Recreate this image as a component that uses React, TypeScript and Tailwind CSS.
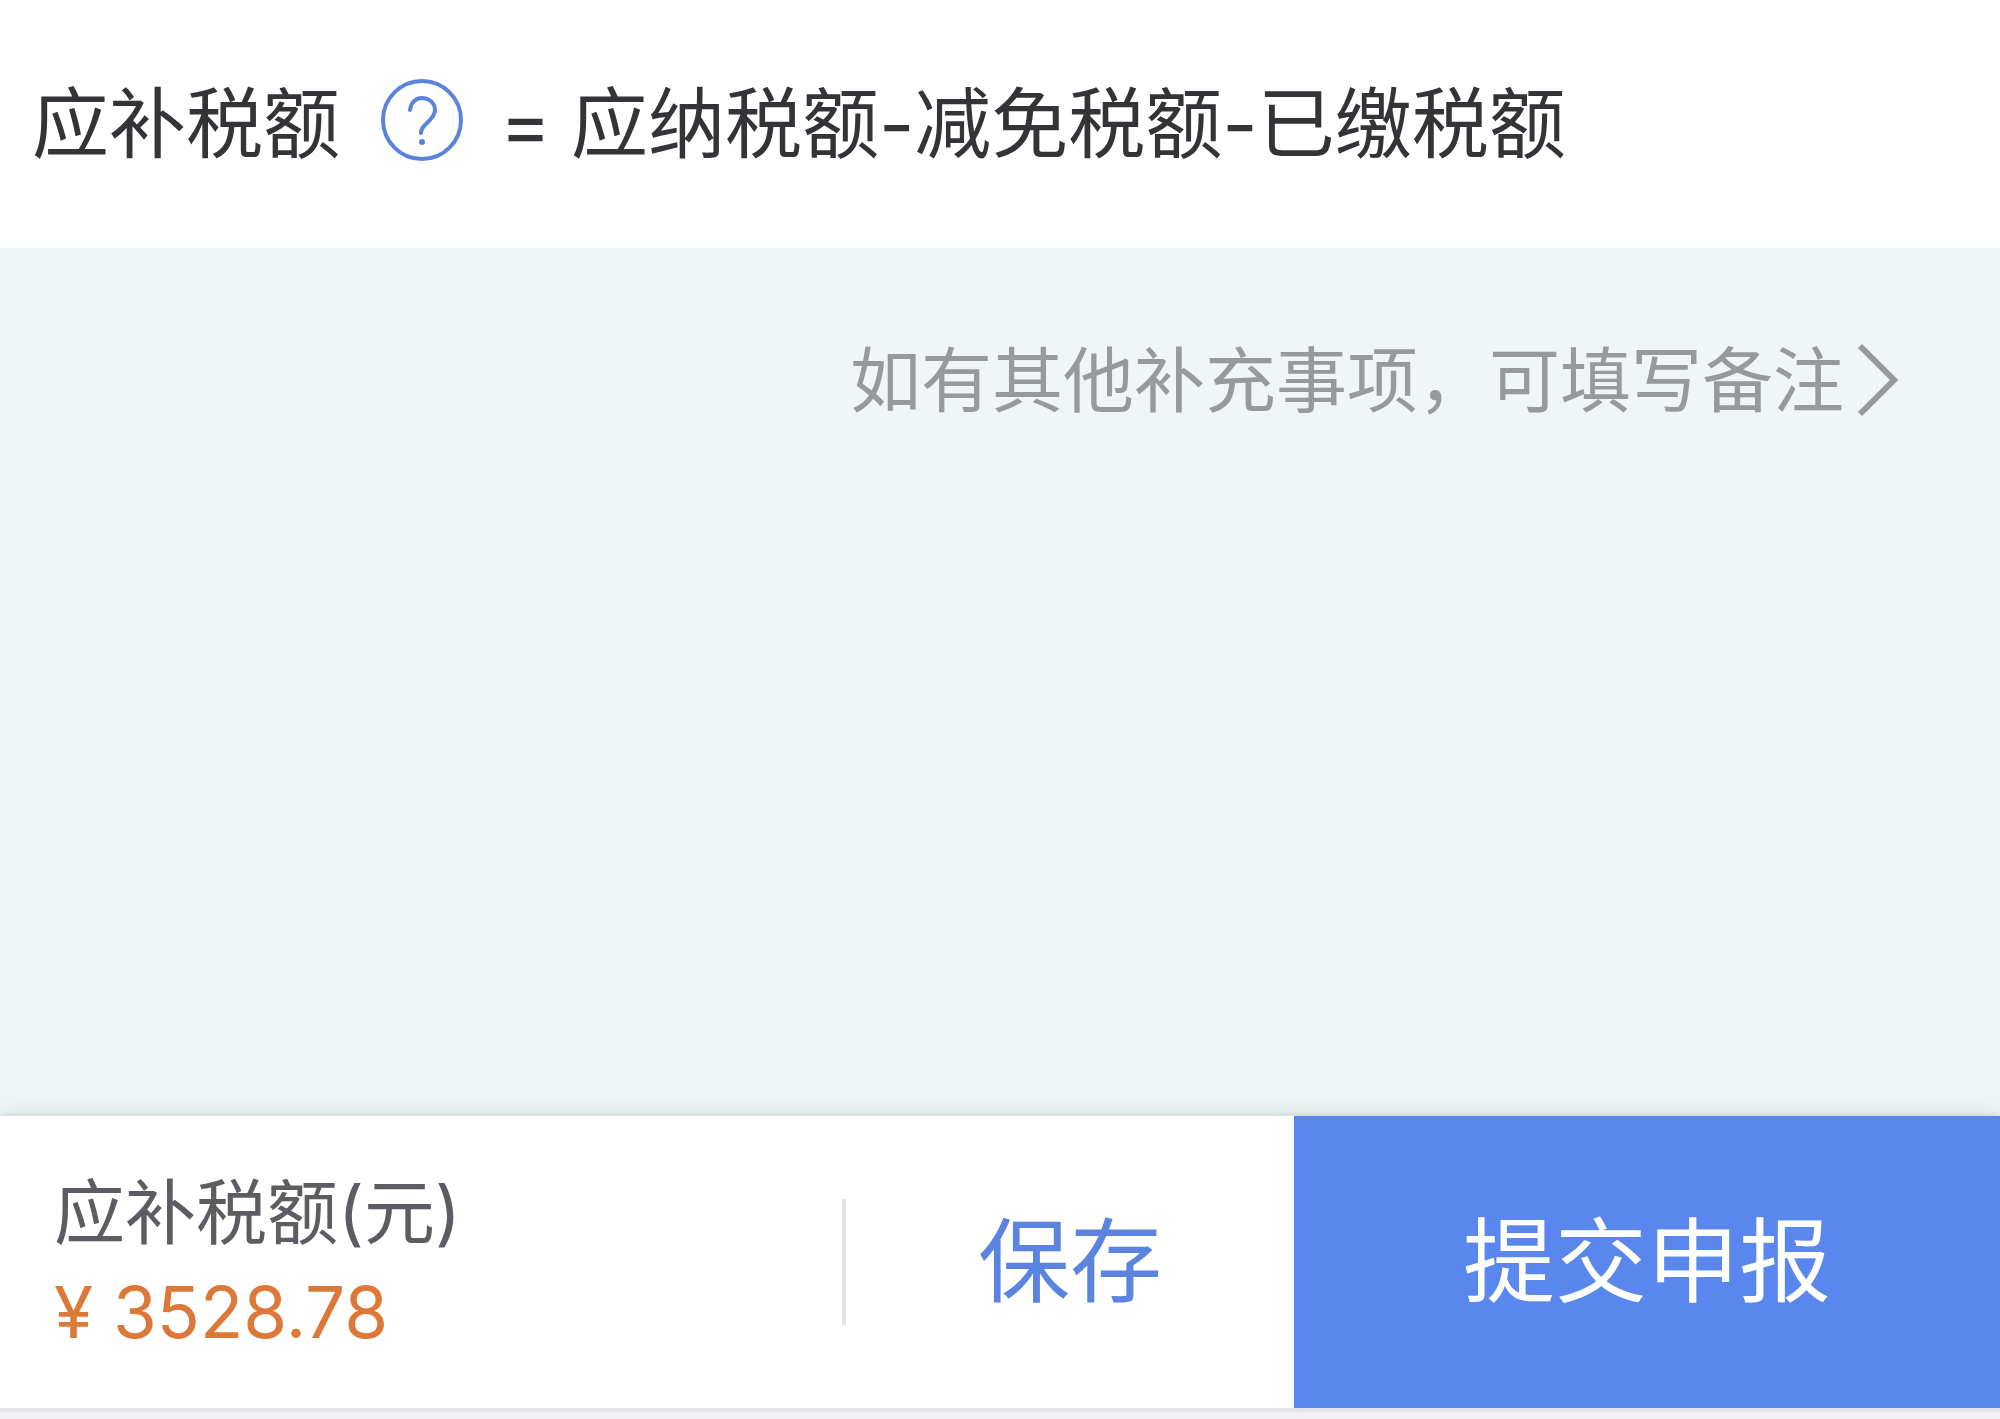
import type { ReactNode } from "react";

const FORMULA = "应纳税额-减免税额-已缴税额";

function HelpIcon() {
  return (
    <svg viewBox="0 0 84 84" className="h-[84px] w-[84px]" fill="none" stroke="#5a84dc" strokeWidth="4" strokeLinecap="round">
      <circle cx="42" cy="42" r="39" />
      <path d="M30 32c1-7 5-12 12-12s13 5 13 12c0 4-2 7-6 11-5 5-8 7-8 12" />
      <circle cx="42" cy="64" r="3" fill="#5a84dc" stroke="none" />
    </svg>
  );
}

function ChevronIcon() {
  return (
    <svg viewBox="0 0 44 76" className="h-[76px] w-[44px]" fill="none" stroke="#97999c" strokeWidth="6">
      <path d="M4 4l34 34L4 72" />
    </svg>
  );
}

function FormulaBar({ children }: { children: ReactNode }) {
  return (
    <header className="flex h-[248px] items-center bg-white pl-8 text-[77px] leading-[80px] whitespace-nowrap text-[#333438]">
      {children}
    </header>
  );
}

export default function App() {
  return (
    <div className="flex min-h-screen flex-col bg-[#f0f5f8] font-['Inter','Noto_Sans_CJK_SC',sans-serif]">
      <FormulaBar>
        <span>应补税额</span>
        <button type="button" aria-label="说明" className="mr-9 mb-2 ml-10">
          <HelpIcon />
        </button>
        <span className="mr-5">=</span>
        <span>{FORMULA}</span>
      </FormulaBar>

      <main className="flex flex-1 items-start justify-end pt-[92px] pr-[100px]">
        <a href="#remark" className="flex items-center gap-3 text-[71px] leading-[80px] whitespace-nowrap text-[#97999c]">
          如有其他补充事项，可填写备注
          <ChevronIcon />
        </a>
      </main>

      <footer className="flex h-[292px] items-stretch bg-white shadow-[0_0_6px_rgba(0,0,0,0.14),0_0_28px_rgba(0,0,0,0.1)]">
        <div className="flex flex-1 flex-col justify-center pl-[54px] text-[71px] leading-[100px] whitespace-nowrap">
          <span className="text-[#5b5d63]">应补税额(元)</span>
          <span className="text-[#dc7838]">¥ 3528.78</span>
        </div>
        <div className="my-auto h-[126px] w-1 bg-[#e2e3e6]" />
        <button type="button" className="w-[448px] text-[92px] text-[#5a84e0]">
          保存
        </button>
        <button type="button" className="w-[706px] bg-[#5a87ee] text-[92px] text-white">
          提交申报
        </button>
      </footer>
      <div className="h-[11px] border-t-4 border-[#e4e4ea] bg-[#f0f0f4]" />
    </div>
  );
}
